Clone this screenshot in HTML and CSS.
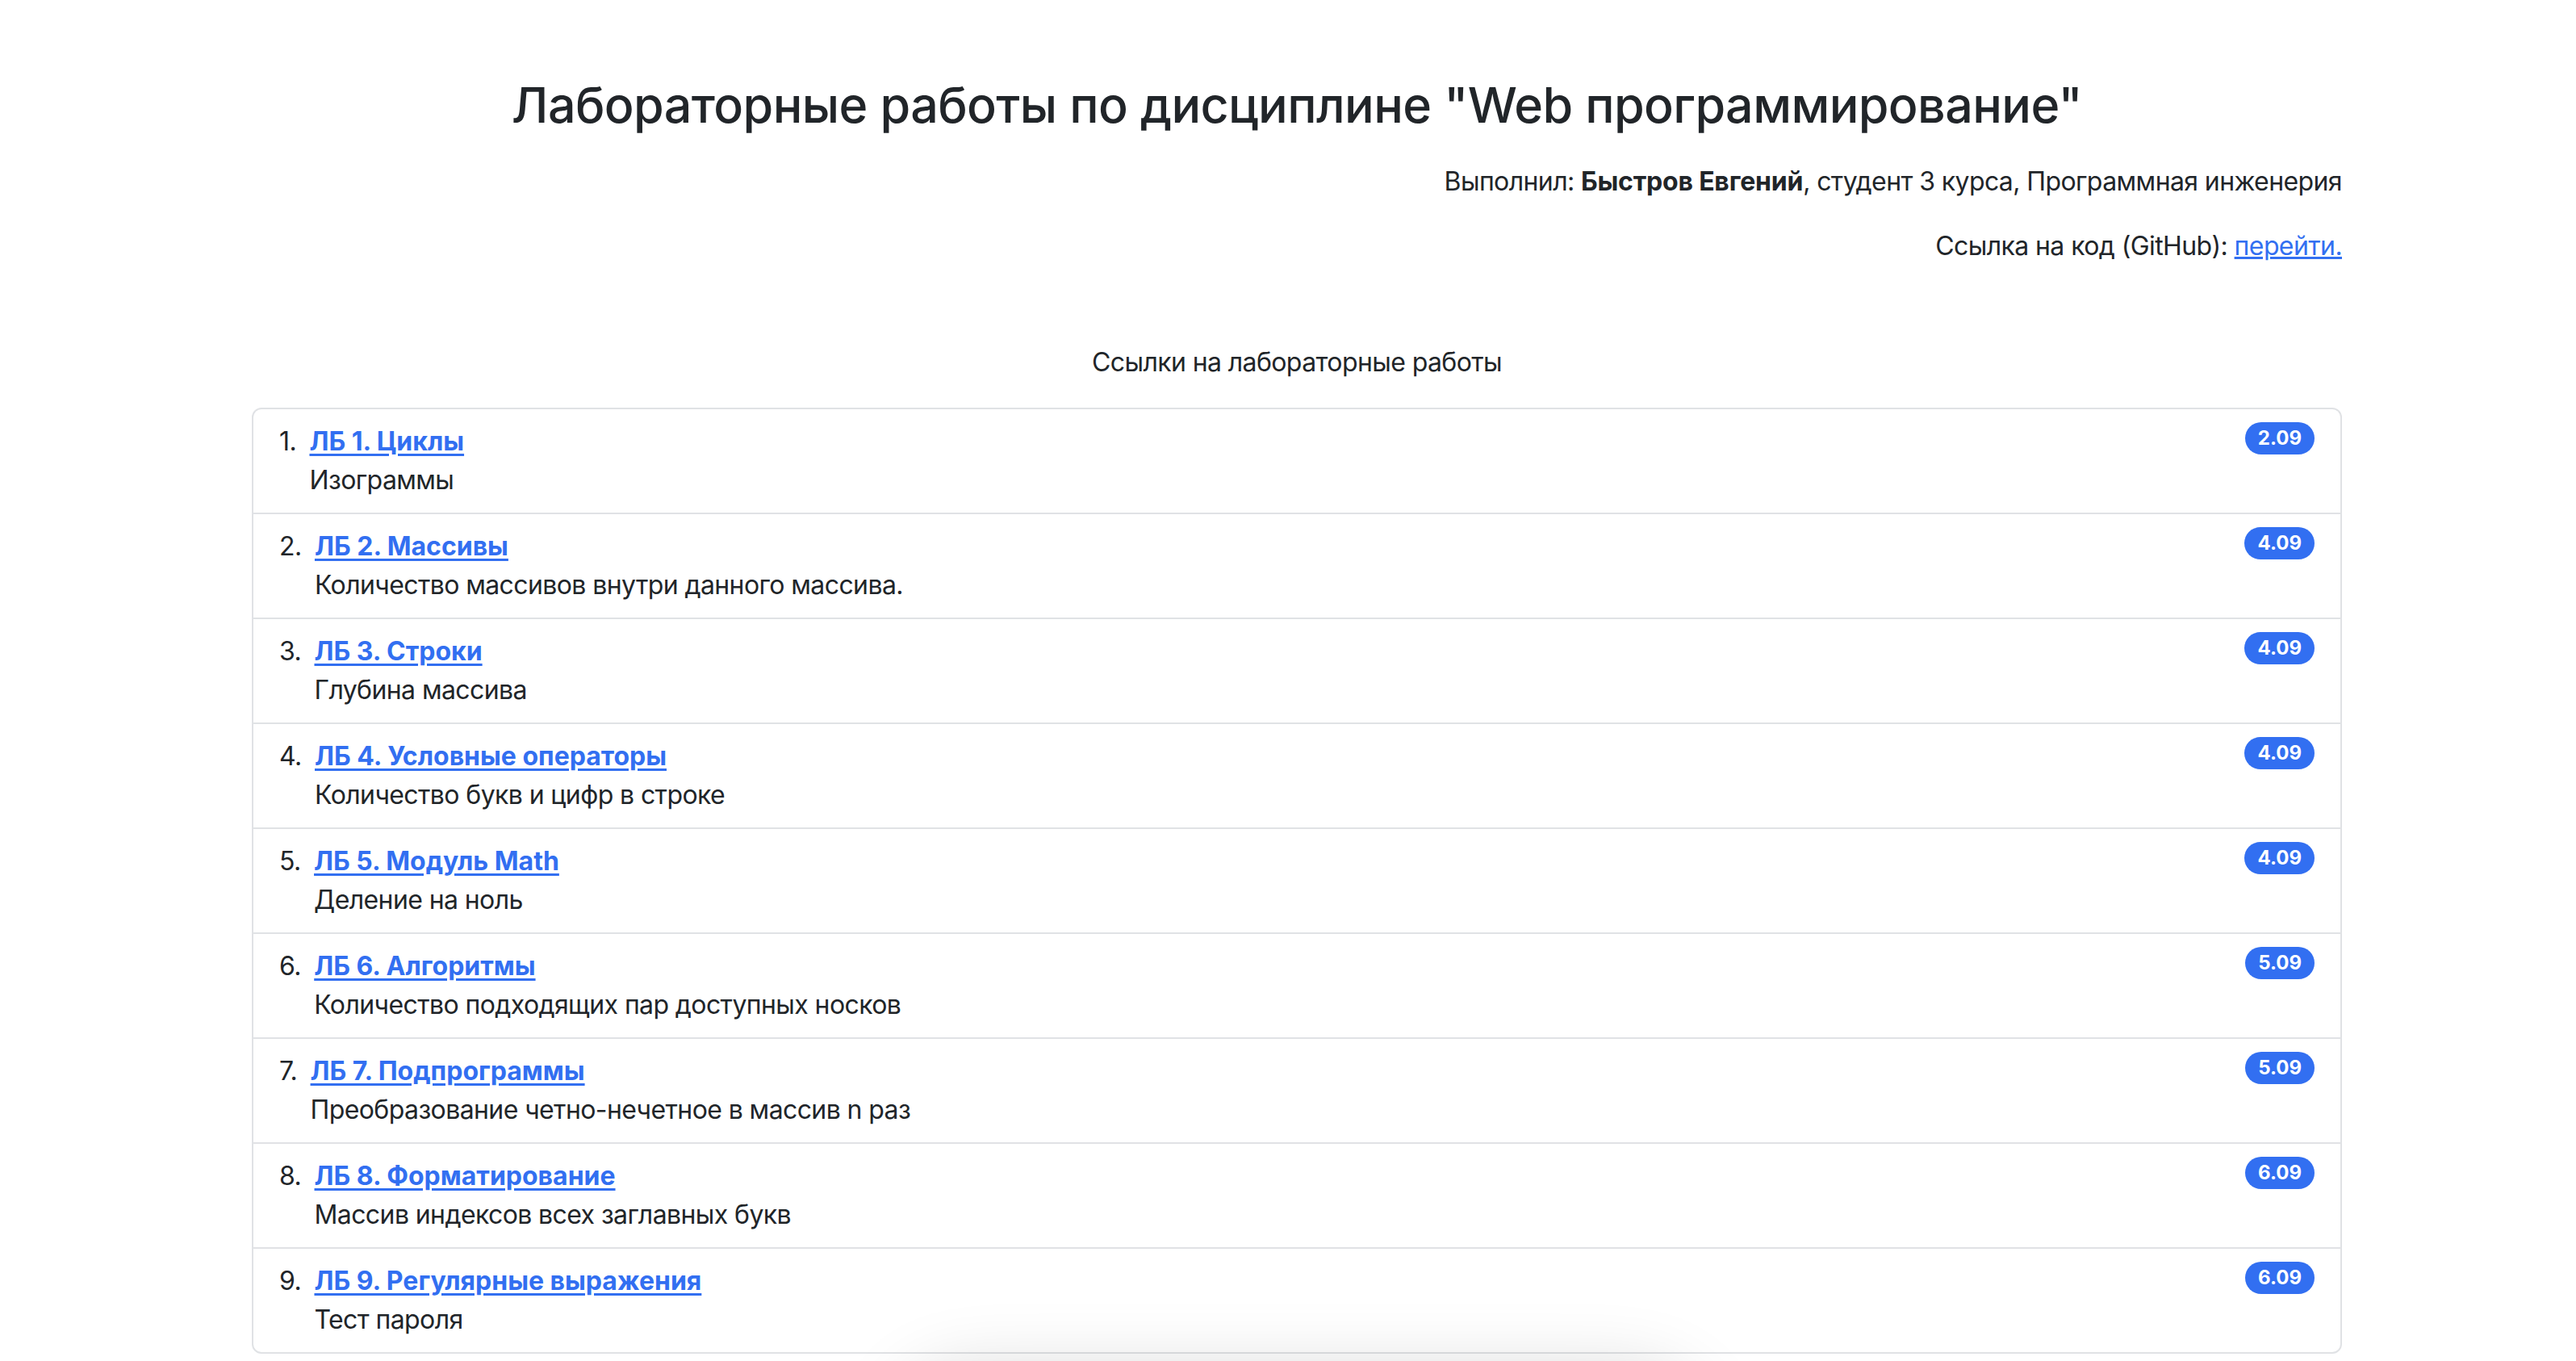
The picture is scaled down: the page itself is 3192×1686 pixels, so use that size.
FILE: index.html
```html
<!DOCTYPE html>
<html lang="ru">
<head>
<meta charset="utf-8">
<title>Лабораторные работы</title>
<link rel="stylesheet" href="styles.css">
</head>
<body>
<div class="page">
  <main class="container">
    <h2 class="title">Лабораторные работы по дисциплине "Web программирование"</h2>
    <p class="meta">Выполнил: <b class="author">Быстров Евгений</b>, студент 3 курса, Программная инженерия</p>
    <p class="meta">Ссылка на код (GitHub): <a href="#">перейти.</a></p>
    <p class="section-title">Ссылки на лабораторные работы</p>
    <ol class="labs">
      <li class="lab">
        <div class="lab-body"><a class="lab-link" href="#">ЛБ 1. Циклы</a><div>Изограммы</div></div>
        <span class="badge">2.09</span>
      </li>
      <li class="lab">
        <div class="lab-body"><a class="lab-link" href="#">ЛБ 2. Массивы</a><div>Количество массивов внутри данного массива.</div></div>
        <span class="badge">4.09</span>
      </li>
      <li class="lab">
        <div class="lab-body"><a class="lab-link" href="#">ЛБ 3. Строки</a><div>Глубина массива</div></div>
        <span class="badge">4.09</span>
      </li>
      <li class="lab">
        <div class="lab-body"><a class="lab-link" href="#">ЛБ 4. Условные операторы</a><div>Количество букв и цифр в строке</div></div>
        <span class="badge">4.09</span>
      </li>
      <li class="lab">
        <div class="lab-body"><a class="lab-link" href="#">ЛБ 5. Модуль Math</a><div>Деление на ноль</div></div>
        <span class="badge">4.09</span>
      </li>
      <li class="lab">
        <div class="lab-body"><a class="lab-link" href="#">ЛБ 6. Алгоритмы</a><div>Количество подходящих пар доступных носков</div></div>
        <span class="badge">5.09</span>
      </li>
      <li class="lab">
        <div class="lab-body"><a class="lab-link" href="#">ЛБ 7. Подпрограммы</a><div>Преобразование четно-нечетное в массив n раз</div></div>
        <span class="badge">5.09</span>
      </li>
      <li class="lab">
        <div class="lab-body"><a class="lab-link" href="#">ЛБ 8. Форматирование</a><div>Массив индексов всех заглавных букв</div></div>
        <span class="badge">6.09</span>
      </li>
      <li class="lab">
        <div class="lab-body"><a class="lab-link" href="#">ЛБ 9. Регулярные выражения</a><div>Тест пароля</div></div>
        <span class="badge">6.09</span>
      </li>
    </ol>
  </main>
</div>
<div class="floating-shadow"></div>
</body>
</html>
```

FILE: styles.css
```css
html, body {
  margin: 0;
  padding: 0;
  background: #ffffff;
}
body {
  font-family: Inter, "Noto Sans", "DejaVu Sans", sans-serif;
  font-size: 32px;
  line-height: 48px;
  color: #212529;
  letter-spacing: -0.6px;
  overflow: hidden;
}
.page {
  padding-left: 22px;
}
.container {
  width: 2590px;
  margin: 0 auto;
}
.title {
  margin: 92px 0 32px;
  font-size: 61px;
  line-height: 77px;
  font-weight: 500;
  text-align: center;
  letter-spacing: -0.6px;
}
.meta {
  margin: 0 0 32px;
  text-align: right;
}
.author {
  letter-spacing: -0.2px;
}
.meta a {
  color: #326ff1;
  text-decoration: underline;
}
.section-title {
  margin: 96px 0 32px;
  text-align: center;
}
.labs {
  list-style: none;
  margin: 0;
  padding: 0;
  border: 2px solid #e0e2e5;
  border-radius: 12px;
  counter-reset: lab;
}
.lab {
  display: flex;
  justify-content: space-between;
  align-items: flex-start;
  padding: 16px 32px;
  border-top: 2px solid #e0e2e5;
  counter-increment: lab;
}
.lab:first-child {
  border-top: 0;
}
.lab::before {
  content: counter(lab) ". ";
  white-space: pre;
}
.lab-body {
  margin-left: 8px;
  margin-right: auto;
}
.lab-link {
  display: block;
  width: max-content;
  font-weight: 700;
  letter-spacing: 0;
  color: #326ff1;
  text-decoration: underline;
  text-underline-offset: 4px;
}
.badge {
  display: inline-block;
  padding: 8px 16px;
  font-size: 24px;
  line-height: 24px;
  font-weight: 700;
  letter-spacing: 0;
  color: #ffffff;
  background: #326ff1;
  border-radius: 50px;
}
.floating-shadow {
  position: fixed;
  left: 1140px;
  width: 940px;
  top: 1730px;
  height: 120px;
  border-radius: 60px;
  background: #ffffff;
  box-shadow: 0 0 90px 30px rgba(0, 0, 0, 0.16);
}
```
